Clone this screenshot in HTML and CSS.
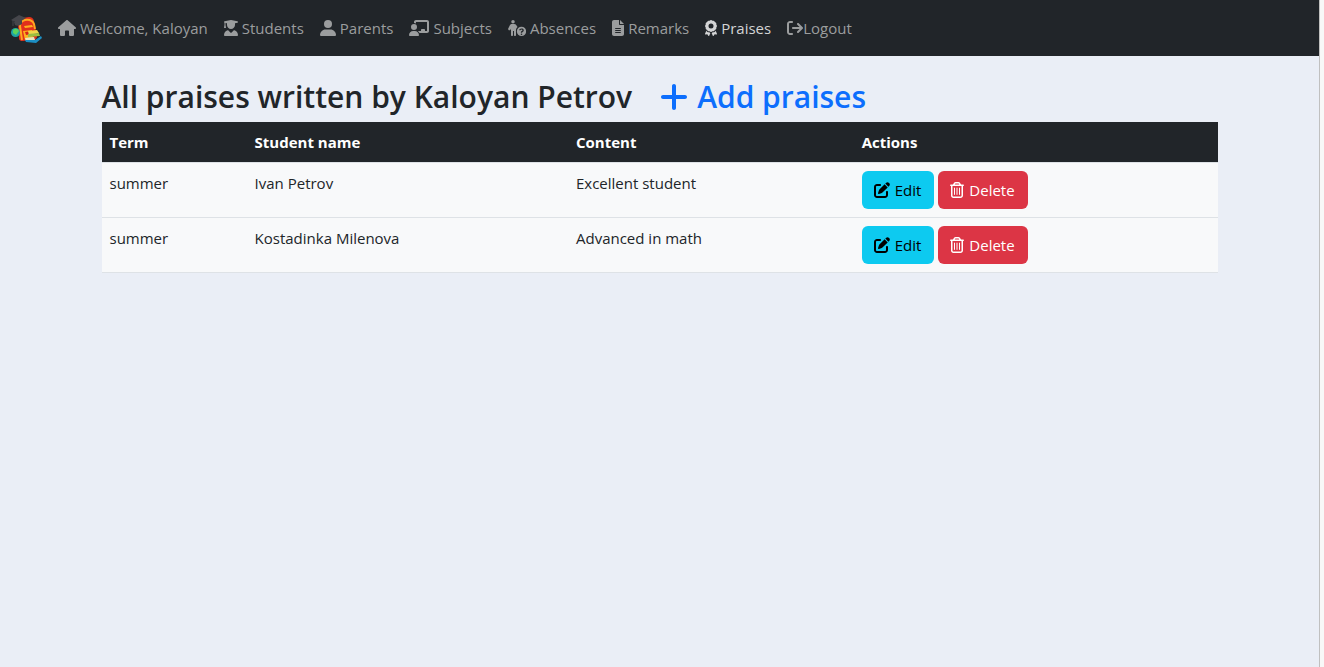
FILE: index.html
```html
<!DOCTYPE html>
<html lang="en">
<head>
<meta charset="utf-8">
<meta name="viewport" content="width=device-width, initial-scale=1">
<title>Praises</title>
<link rel="stylesheet" href="styles.css">
</head>
<body>
<svg class="sprite" aria-hidden="true">
  <symbol id="edit" viewBox="0 0 512 512"><path d="M471.600 21.700c-21.900-21.900-57.300-21.900-79.200 0L362.300 51.700l97.900 97.900 30.100-30.100c21.900-21.900 21.900-57.300 0-79.200L471.600 21.700zm-299.200 220c-6.100 6.100-10.800 13.600-13.500 21.900l-29.600 88.800c-2.900 8.600-.6 18.100 5.800 24.600s15.900 8.700 24.600 5.800l88.800-29.600c8.200-2.700 15.700-7.400 21.900-13.500L437.700 172.300 339.700 74.300 172.400 241.700zM96 64C43 64 0 107 0 160V416c0 53 43 96 96 96H352c53 0 96-43 96-96V320c0-17.700-14.300-32-32-32s-32 14.300-32 32v96c0 17.700-14.300 32-32 32H96c-17.700 0-32-14.300-32-32V160c0-17.700 14.300-32 32-32h96c17.700 0 32-14.300 32-32s-14.300-32-32-32H96z"/></symbol>
  <symbol id="trash" viewBox="0 0 448 512"><path d="M170.500 51.600L151.500 80h145l-19-28.400c-1.500-2.200-4-3.600-6.700-3.600H177.100c-2.700 0-5.200 1.300-6.700 3.600zm147-26.600L354.200 80H424c13.300 0 24 10.700 24 24s-10.700 24-24 24h-8V432c0 44.200-35.800 80-80 80H112c-44.200 0-80-35.800-80-80V128H24c-13.300 0-24-10.700-24-24S10.700 80 24 80h69.800l36.700-55.100C140.900 9.400 158.400 0 177.100 0h93.700c18.700 0 36.200 9.400 46.600 24.900zM80 128V432c0 17.700 14.300 32 32 32H336c17.700 0 32-14.300 32-32V128H80zm80 64V400c0 8.800-7.200 16-16 16s-16-7.200-16-16V192c0-8.800 7.200-16 16-16s16 7.200 16 16zm80 0V400c0 8.800-7.200 16-16 16s-16-7.200-16-16V192c0-8.800 7.200-16 16-16s16 7.200 16 16zm80 0V400c0 8.800-7.200 16-16 16s-16-7.200-16-16V192c0-8.800 7.200-16 16-16s16 7.200 16 16z"/></symbol>
</svg>
<div class="page">
  <nav class="navbar">
    <a class="brand" href="#" aria-label="School home">
      <svg viewBox="0 0 32 32" width="32" height="32" aria-hidden="true">
        <path fill="#e0301c" d="M8 12q0-5 5-6l6-1q4 0 5 4l3 15q0 3-3 4l-12 1q-3 0-3-3z"/>
        <path fill="none" stroke="#ffa81f" stroke-width="2" d="M12 28l-2-14q0-5 5-6 7-1 9 4l1 5"/>
        <path fill="#ffb01d" d="M14 14l8-1 1 2-8 1zM13 19l9-1 1 8-8 2z"/>
        <path fill="#d3231b" d="M15 20l6-1 1 3-6 1z"/>
        <path fill="#45464b" d="M1 8l8-5 7 3-8 5zM4 10l8-2v4q-4 3-7 1z"/>
        <path stroke="#45464b" d="M3 8v6"/>
        <circle cx="5.500" cy="20.500" r="4.500" fill="#1ea3a6"/>
        <path fill="#5bd35c" d="M3 18q4-3 6 1l-3 4-3-2z"/>
        <path fill="#f0d64b" d="M18 19l9-1 2 3-10 2z"/>
        <path fill="#9bbd42" d="M18 22l11-1 1 3-12 1z"/>
        <path fill="#e7e5c2" d="M15 26l9-1 1 3-9 1z"/>
        <path fill="#1c8fc4" d="M15 28l10 0 6-4 1 2-6 5-10-1z"/>
      </svg>
    </a>
    <ul class="nav-list">
      <li><a class="nav-link" href="#"><svg class="icon" viewBox="0 0 576 512" width="18" height="16"><path d="M575.800 255.500c0 18-15 32.100-32 32.100h-32l.7 160.200c0 2.700-.2 5.400-.5 8.100V472c0 22.100-17.900 40-40 40H392c-22.100 0-40-17.900-40-40V360c0-13-11-24-24-24h-80c-13 0-24 11-24 24v112c0 22.100-17.900 40-40 40h-80c-22.100 0-40-17.900-40-40V287.600H32c-18 0-32-14-32-32.100 0-9 3-17 10-24L266.400 8c7-7 15-8 22-8s15 2 21 7L564.800 231.500c8 7 12 15 11 24z"/></svg>Welcome, Kaloyan</a></li>
      <li><a class="nav-link" href="#"><svg class="icon" viewBox="0 0 448 512" width="14" height="16"><path d="M219.300.5c3.100-.6 6.300-.6 9.400 0l200 40C439.900 42.700 448 52.600 448 64s-8.100 21.300-19.300 23.500L352 102.900V160c0 70.700-57.300 128-128 128S96 230.700 96 160V102.900L48 93.300v65.100l15.700 78.400c.9 4.700-.3 9.600-3.300 13.300S52.800 256 48 256H16c-4.800 0-9.300-2.100-12.400-5.900s-4.300-8.600-3.300-13.300L16 158.400V86.600C6.500 83.300 0 74.300 0 64 0 52.600 8.100 42.700 19.300 40.500l200-40zM111.900 327.700c10.500-3.400 21.800.4 29.400 8.500l71 75.500c6.300 6.700 17 6.700 23.300 0l71-75.500c7.600-8.100 18.900-11.900 29.400-8.500C401 348.600 448 409.400 448 481.300c0 17-13.800 30.700-30.700 30.700H30.700C13.800 512 0 498.200 0 481.300c0-71.900 47-132.700 111.900-153.600z"/></svg>Students</a></li>
      <li><a class="nav-link" href="#"><svg class="icon" viewBox="0 0 512 512" width="16" height="16"><circle cx="256" cy="128" r="128"/><path d="M0 482c0-98 78-178 176-178h160c98 0 176 80 176 178 0 17-13 30-30 30H30c-17 0-30-13-30-30z"/></svg>Parents</a></li>
      <li><a class="nav-link" href="#"><svg class="icon" viewBox="0 0 640 512" width="20" height="16"><path d="M160 64c0-35.300 28.700-64 64-64H576c35.300 0 64 28.700 64 64V352c0 35.300-28.700 64-64 64H336.800c-11.800-25.500-29.900-47.500-52.400-64H384V320c0-17.700 14.300-32 32-32h64c17.700 0 32 14.300 32 32v32h64V64H224v49.100C205.200 102.200 183.300 96 160 96V64zm0 64a96 96 0 1 1 0 192 96 96 0 1 1 0-192zM133.300 352h53.300C260.300 352 320 411.700 320 485.300c0 14.700-11.900 26.700-26.700 26.700H26.700C11.900 512 0 500.100 0 485.300 0 411.700 59.700 352 133.300 352z"/></svg>Subjects</a></li>
      <li><a class="nav-link" href="#"><svg class="icon" viewBox="0 0 576 512" width="18" height="16"><circle cx="160" cy="56" r="56"/><path fill-rule="evenodd" d="M128 128h70c30 0 54 14 70 40l36 59c-31 29-50 68-48 112v141c0 18-14 32-32 32s-32-14-32-32V352h-32v128c0 18-14 32-32 32s-32-14-32-32V277l-24 39c-9 15-31 20-46 11S-5 297 4 282l55-114c16-28 39-40 69-40zM432 216a148 148 0 1 1 0 296 148 148 0 1 1 0-296zm0 212a26 26 0 1 0 0 52 26 26 0 1 0 0-52zm-74-100h42c2-17 12-22 32-22 21 0 30 7 30 18s-7 16-22 24c-20 11-29 20-29 46v16h42v-10c0-9 5-13 17-20 23-12 35-28 35-55 0-36-29-57-72-57-46 0-72 22-75 60z"/></svg>Absences</a></li>
      <li><a class="nav-link" href="#"><svg class="icon" viewBox="0 0 384 512" width="12" height="16"><path fill-rule="evenodd" d="M64 0C28.700 0 0 28.700 0 64V448c0 35.300 28.700 64 64 64H320c35.300 0 64-28.700 64-64V160H256c-17.700 0-32-14.300-32-32V0H64zM256 0V128H384L256 0zM112 256H272c8.800 0 16 7.200 16 16s-7.200 16-16 16H112c-8.800 0-16-7.200-16-16s7.200-16 16-16zm0 64H272c8.800 0 16 7.200 16 16s-7.200 16-16 16H112c-8.800 0-16-7.200-16-16s7.200-16 16-16zm0 64H272c8.800 0 16 7.200 16 16s-7.200 16-16 16H112c-8.800 0-16-7.200-16-16s7.200-16 16-16z"/></svg>Remarks</a></li>
      <li><a class="nav-link active" aria-current="page" href="#"><svg class="icon" viewBox="0 0 384 512" width="12" height="16"><path fill-rule="evenodd" d="M173.800 5.500c11-7.300 25.400-7.300 36.400 0L228 17.200c6 3.900 13 5.800 20.100 5.400l21.300-1.300c13.200-.8 25.600 6.400 31.500 18.200l9.600 19.100c3.200 6.400 8.400 11.500 14.700 14.700L344.500 83c11.800 5.900 19 18.300 18.200 31.500l-1.300 21.300c-.4 7.100 1.500 14.200 5.400 20.100l11.800 17.800c7.300 11 7.300 25.400 0 36.400L366.800 228c-3.900 6-5.800 13-5.400 20.100l1.300 21.300c.8 13.200-6.400 25.600-18.200 31.500l-19.100 9.600c-6.400 3.200-11.500 8.400-14.700 14.700L301 344.500c-5.900 11.800-18.300 19-31.500 18.200l-21.300-1.300c-7.100-.4-14.200 1.500-20.100 5.400l-17.800 11.800c-11 7.300-25.400 7.300-36.400 0L156 366.800c-6-3.900-13-5.800-20.100-5.400l-21.300 1.300c-13.200.8-25.600-6.400-31.500-18.200l-9.600-19.100c-3.200-6.400-8.400-11.500-14.700-14.700L39.500 301c-11.800-5.900-19-18.300-18.200-31.500l1.300-21.300c.4-7.100-1.500-14.200-5.400-20.100L5.500 210.200c-7.300-11-7.300-25.400 0-36.400L17.200 156c3.900-6 5.800-13 5.400-20.100l-1.300-21.300c-.8-13.200 6.400-25.600 18.200-31.500l19.100-9.600C65 70.200 70.200 65 73.400 58.600L83 39.500c5.900-11.800 18.300-19 31.500-18.200l21.300 1.300c7.100.4 14.200-1.500 20.100-5.400L173.800 5.500zM272 192a80 80 0 1 0-160 0 80 80 0 1 0 160 0zM1.300 441.800L44.400 339.300c.2.100.3.200.4.400l9.600 19.100c11.700 23.200 36 37.300 62 35.800l21.300-1.300c.2 0 .5 0 .7.200l17.800 11.800c5.100 3.300 10.500 5.900 16.100 7.700l-37.600 89.300c-2.300 5.500-7.400 9.200-13.300 9.700s-11.600-2.200-14.800-7.200L74.400 455.500l-56.100 8.300c-5.700.8-11.400-1.500-15-6s-4.300-10.700-2.100-16zm248 60.400L211.700 413c5.600-1.800 11-4.300 16.100-7.700l17.800-11.800c.2-.1.400-.2.700-.2l21.300 1.300c26 1.500 50.300-12.600 62-35.800l9.600-19.100c.1-.2.200-.3.400-.4l43.200 102.500c2.200 5.300 1.400 11.400-2.100 16s-9.300 6.900-15 6l-56.100-8.300-32.200 49.200c-3.200 5-8.900 7.700-14.800 7.200s-11-4.300-13.300-9.700z"/></svg>Praises</a></li>
      <li><a class="nav-link flush" href="#"><svg class="icon" viewBox="0 0 512 512" width="16" height="16"><path d="M502.600 278.600c12.500-12.500 12.500-32.800 0-45.300l-128-128c-12.500-12.500-32.800-12.500-45.300 0s-12.500 32.800 0 45.300L402.700 224H192c-17.700 0-32 14.300-32 32s14.300 32 32 32H402.700l-73.400 73.400c-12.500 12.500-12.500 32.800 0 45.300s32.800 12.500 45.300 0l128-128zM160 96c17.700 0 32-14.300 32-32s-14.300-32-32-32H96C43 32 0 75 0 128V384c0 53 43 96 96 96h64c17.700 0 32-14.300 32-32s-14.300-32-32-32H96c-17.700 0-32-14.300-32-32V128c0-17.700 14.300-32 32-32h64z"/></svg>Logout</a></li>
    </ul>
  </nav>
  <main class="container">
    <div class="heading">
      <h2>All praises written by Kaloyan Petrov</h2>
      <a class="add" href="#"><svg class="icon" viewBox="0 0 448 512" width="28" height="32"><path d="M256 80c0-17.700-14.300-32-32-32s-32 14.300-32 32V224H48c-17.700 0-32 14.300-32 32s14.300 32 32 32H192V432c0 17.700 14.300 32 32 32s32-14.300 32-32V288H400c17.700 0 32-14.300 32-32s-14.300-32-32-32H256V80z"/></svg>Add praises</a>
    </div>
    <table class="table">
      <thead>
        <tr><th class="col-term" scope="col">Term</th><th class="col-name" scope="col">Student name</th><th class="col-content" scope="col">Content</th><th scope="col">Actions</th></tr>
      </thead>
      <tbody>
        <tr>
          <td>summer</td><td>Ivan Petrov</td><td>Excellent student</td>
          <td><div class="actions">
            <button type="button" class="btn btn-info"><svg class="icon" width="16" height="16"><use href="#edit"/></svg>Edit</button>
            <button type="button" class="btn btn-danger"><svg class="icon" width="14" height="16"><use href="#trash"/></svg>Delete</button>
          </div></td>
        </tr>
        <tr>
          <td>summer</td><td>Kostadinka Milenova</td><td>Advanced in math</td>
          <td><div class="actions">
            <button type="button" class="btn btn-info"><svg class="icon" width="16" height="16"><use href="#edit"/></svg>Edit</button>
            <button type="button" class="btn btn-danger"><svg class="icon" width="14" height="16"><use href="#trash"/></svg>Delete</button>
          </div></td>
        </tr>
      </tbody>
    </table>
  </main>
</div>
</body>
</html>
```

FILE: styles.css
```css
*, *::before, *::after { box-sizing: border-box; }

body {
  margin: 0;
  padding-right: 4px;
  background: #f8f8f8;
  color: #212529;
  font-family: "Segoe UI", "Open Sans", "Noto Sans", sans-serif;
  font-size: 15px;
  line-height: 24px;
}

a { text-decoration: none; }

.sprite { position: absolute; width: 0; height: 0; }

.icon { display: block; flex: none; fill: currentColor; }

.page {
  min-height: 100vh;
  background: #eaeef6;
  border-right: 1px solid #c0c0c0;
}

.navbar {
  display: flex;
  align-items: center;
  gap: 8px;
  padding: 8px 10px;
  background: #212529;
}

.brand { display: flex; }

.nav-list {
  display: flex;
  margin: 0;
  padding: 0;
  list-style: none;
}

.nav-link {
  display: flex;
  align-items: center;
  gap: 4px;
  padding: 8px;
  color: #9b9d9e;
  white-space: nowrap;
}

.nav-link.flush { gap: 0; }
.nav-link.active { color: #d3d4d5; }

.container {
  max-width: 1140px;
  margin: 0 auto;
  padding: 22px 12px;
}

.heading {
  display: flex;
  align-items: center;
  gap: 28px;
  margin-bottom: 6px;
  font-size: 30px;
  line-height: 38px;
  font-weight: 600;
}

.heading h2 { margin: 0; font: inherit; }

.add {
  display: flex;
  align-items: center;
  gap: 9px;
  color: #0d6efd;
}

.table {
  width: 100%;
  table-layout: fixed;
  border-collapse: separate;
  border-spacing: 0;
}

.table th, .table td {
  padding: 8px;
  border-bottom: 1px solid #dee2e6;
  text-align: left;
  vertical-align: top;
}

.table th {
  background: #212529;
  color: #fff;
  font-weight: 700;
}

.table td { background: #f8f9fa; }

.col-term { width: 13%; }
.col-name { width: 28.8%; }
.col-content { width: 25.6%; }

.actions { display: flex; gap: 4px; }

.btn {
  display: flex;
  align-items: center;
  gap: 5px;
  padding: 7px 13px 7px 12px;
  border: 0;
  border-radius: 6px;
  font: inherit;
  cursor: pointer;
}

.btn-info { background: #0dcaf0; color: #000; }
.btn-danger { background: #dc3545; color: #fff; }
```
